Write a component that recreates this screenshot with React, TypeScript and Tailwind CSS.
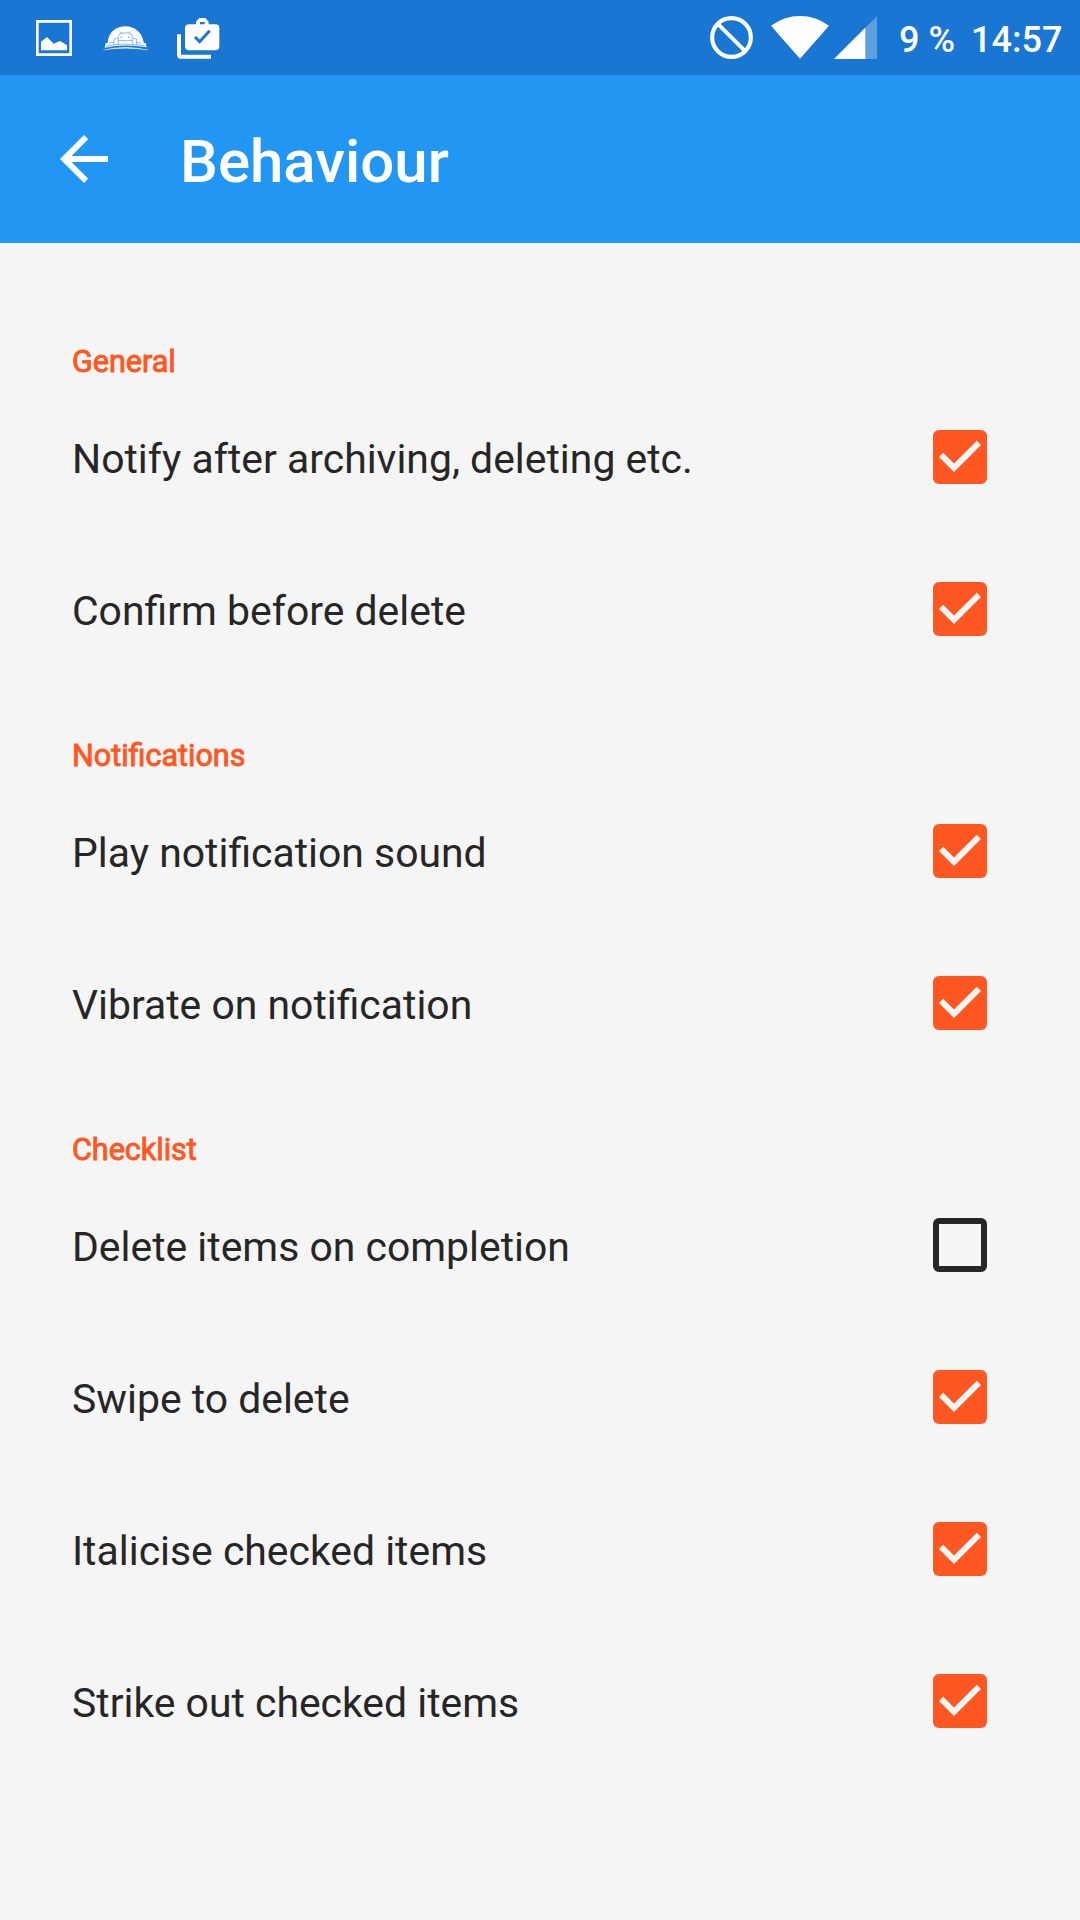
import { useState } from 'react';

interface Preference {
  id: string;
  title: string;
  checked: boolean;
}

interface PreferenceGroup {
  title: string;
  items: Preference[];
}

const groups: PreferenceGroup[] = [
  {
    title: 'General',
    items: [
      { id: 'notify', title: 'Notify after archiving, deleting etc.', checked: true },
      { id: 'confirm', title: 'Confirm before delete', checked: true },
    ],
  },
  {
    title: 'Notifications',
    items: [
      { id: 'sound', title: 'Play notification sound', checked: true },
      { id: 'vibrate', title: 'Vibrate on notification', checked: true },
    ],
  },
  {
    title: 'Checklist',
    items: [
      { id: 'delete-completed', title: 'Delete items on completion', checked: false },
      { id: 'swipe', title: 'Swipe to delete', checked: true },
      { id: 'italicise', title: 'Italicise checked items', checked: true },
      { id: 'strike', title: 'Strike out checked items', checked: true },
    ],
  },
];

function PictureIcon() {
  return (
    <svg viewBox="0 0 108 108" className="w-9 h-9" fill="white">
      <path d="M0 0H108V108H0ZM8 8V100H100V8Z" fillRule="evenodd" />
      <path d="M15 91V65L33 51L53 71L72 63L93 76V91Z" />
    </svg>
  );
}

// Domed hat with a small robot on the front
function HatIcon() {
  return (
    <svg viewBox="0 0 138 75" className="w-[46px] h-[25px]" fill="none">
      <path d="M14 50C16 20 38 1 67 1C96 1 118 20 122 50L128 51L131 64Q68 52 5 65L8 52Z" fill="white" />
      <path d="M1 72Q68 56 136 72Q68 62 1 72Z" fill="white" stroke="white" strokeOpacity=".4" strokeWidth="2" />
      <g stroke="#1976d2" strokeOpacity=".6" strokeWidth="2.5">
        <path d="M46 44V31Q48 22 57 21H77Q86 22 88 31V44M50 16L56 22M84 16L78 22M46 44H88M33 57V39L44 37M101 57V39L90 37M18 51L32 49M116 51L102 49M46 44V55M88 44V55M9 60Q68 49 127 60" />
        <path d="M55 32V36M77 32V36" strokeWidth="4" />
      </g>
    </svg>
  );
}

function WorkCheckIcon() {
  return (
    <svg viewBox="0 0 129 123" className="w-[43px] h-[41px]" fill="white">
      <path d="M0 49H12V110H102V122H12Q0 122 0 110Z" />
      <path d="M36 19H57V11L67 0H85L95 11V19H116Q127 19 127 31V84Q127 97 115 97H37Q24 97 24 84V31Q24 19 36 19ZM69 19H83V12H69Z" fillRule="evenodd" />
      <path d="M54 57L68 71L98 38" stroke="#1976d2" strokeWidth="9" fill="none" />
    </svg>
  );
}

function BlockedIcon() {
  return (
    <svg viewBox="0 0 129 129" className="w-[43px] h-[43px]" fill="none" stroke="white">
      <circle cx="64.5" cy="64.5" r="58" strokeWidth="12.5" />
      <path d="M25 25L104 104" strokeWidth="12" />
    </svg>
  );
}

function WifiIcon() {
  return (
    <svg viewBox="0 0 174 129" className="w-[58px] h-[43px]" fill="white">
      <path d="M87 128L0 29Q39 0 87 0Q135 0 174 29Z" />
    </svg>
  );
}

function SignalIcon() {
  return (
    <svg viewBox="0 0 129 129" className="w-[43px] h-[43px]" fill="white">
      <path d="M0 129L129 0V129Z" fillOpacity=".3" />
      <path d="M0 129L94 35V129Z" />
    </svg>
  );
}

function StatusBar() {
  return (
    <div className="flex h-[75px] items-start bg-[#1976d2] text-white">
      <div className="flex flex-1 items-start pl-9">
        <div className="pt-5">
          <PictureIcon />
        </div>
        <div className="ml-[31px] pt-[26px]">
          <HatIcon />
        </div>
        <div className="ml-7 pt-[18px]">
          <WorkCheckIcon />
        </div>
      </div>
      <div className="flex items-start pt-4">
        <BlockedIcon />
        <div className="ml-[18px]">
          <WifiIcon />
        </div>
        <div className="ml-[5px]">
          <SignalIcon />
        </div>
      </div>
      <div className="flex w-[203px] pt-[19px] pl-[22px] text-[36px] leading-[42px] font-medium whitespace-nowrap">
        <span className="w-[72px]">9 %</span>
        <span>14:57</span>
      </div>
    </div>
  );
}

function Toolbar() {
  return (
    <header className="flex h-[168px] items-center bg-[#2196f3] pl-12 text-white">
      <button aria-label="Back">
        <svg viewBox="0 0 24 24" className="w-[72px] h-[72px]" fill="currentColor">
          <path d="M20 11H7.83l5.59-5.59L12 4l-8 8 8 8 1.41-1.41L7.83 13H20v-2z" />
        </svg>
      </button>
      <h1 className="ml-[60px] pt-[5px] text-[60px] leading-[71px] font-medium">Behaviour</h1>
    </header>
  );
}

function Checkbox({ checked }: { checked: boolean }) {
  if (!checked) {
    return <span className="h-[54px] w-[54px] rounded-md border-[6px] border-[#262626]" />;
  }
  return (
    <span className="h-[54px] w-[54px] rounded-md bg-[#ff5722]">
      <svg viewBox="3 3 18 18" className="h-full w-full" fill="#f5f5f5">
        <path d="M10 17l-5-5 1.41-1.41L10 14.17l7.59-7.59L19 8l-9 9z" />
      </svg>
    </span>
  );
}

function PreferenceRow({ item }: { item: Preference }) {
  const [checked, setChecked] = useState(item.checked);

  return (
    <button
      role="checkbox"
      aria-checked={checked}
      onClick={() => setChecked(!checked)}
      className="flex h-[152px] w-full items-center justify-between pr-[93px] pl-[72px] text-left"
    >
      <span className="pt-1 text-[40.9px] leading-[50px] text-[#262626]">{item.title}</span>
      <Checkbox checked={checked} />
    </button>
  );
}

export default function App() {
  return (
    <div className="min-h-[1920px] w-[1080px] bg-[#f5f5f5] font-['Roboto',sans-serif]">
      <StatusBar />
      <Toolbar />
      <main className="pt-12">
        {groups.map((group) => (
          <section key={group.title}>
            <h2 className="h-[90px] pt-[53px] pl-[72px] text-[30.5px] leading-[36px] text-[#ff5722] [-webkit-text-stroke:0.9px_#ff5722]">
              {group.title}
            </h2>
            {group.items.map((item) => (
              <PreferenceRow key={item.id} item={item} />
            ))}
          </section>
        ))}
      </main>
    </div>
  );
}
